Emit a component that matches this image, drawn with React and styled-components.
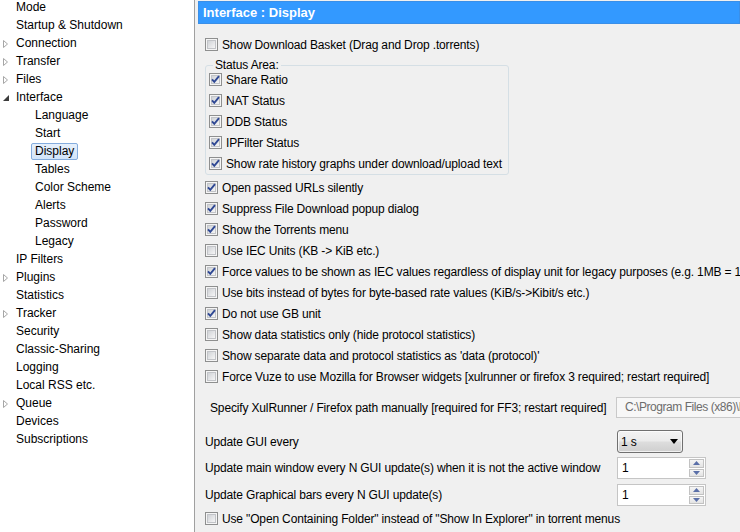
import React from 'react';
import styled, { createGlobalStyle } from 'styled-components';

const Global = createGlobalStyle`
  html, body { margin: 0; padding: 0; }
  body {
    width: 740px; height: 532px; overflow: hidden;
    background: #f0f0f0;
    font-family: "Liberation Sans", Arial, sans-serif;
    font-size: 12px; color: #000;
  }
`;

const Window = styled.div`
  display: flex;
  width: 740px;
  height: 532px;
  overflow: hidden;
`;

/* ---------- Sidebar tree ---------- */
const Sidebar = styled.nav`
  width: 195px;
  flex: none;
  box-sizing: border-box;
  background: #fff;
  border-right: 1px solid #a0a0a0;
  overflow: hidden;
`;

const Tree = styled.ul`
  list-style: none;
  margin: -1.5px 0 0;
  padding: 0;
`;

const TreeRow = styled.li`
  height: 18px;
  display: flex;
  align-items: center;
  padding-left: ${p => p.$level * 19}px;
  white-space: nowrap;
`;

const Twisty = styled.span`
  width: 12px;
  height: 18px;
  flex: none;
  display: flex;
  align-items: center;
`;

const TreeLabel = styled.span`
  height: 17px;
  box-sizing: border-box;
  line-height: 15px;
  padding: 0 3px;
  border: 1px solid ${p => (p.$selected ? '#84acdd' : 'transparent')};
  border-radius: 2px;
  background: ${p => (p.$selected ? 'linear-gradient(#e6f0fc, #d2e4f9)' : 'transparent')};
`;

const Arrow = ({ open }) =>
  open ? (
    <svg width="12" height="12" viewBox="0 0 12 12">
      <path d="M9 3 L9 9 L3 9 Z" fill="#3c3c3c" />
    </svg>
  ) : (
    <svg width="12" height="12" viewBox="0 0 12 12">
      <path d="M3.5 2.5 L7.5 6 L3.5 9.5 Z" fill="#fff" stroke="#a6a6a6" />
    </svg>
  );

const treeItems = [
  { t: 'Mode' },
  { t: 'Startup & Shutdown' },
  { t: 'Connection', a: 'closed' },
  { t: 'Transfer', a: 'closed' },
  { t: 'Files', a: 'closed' },
  { t: 'Interface', a: 'open' },
  { t: 'Language', l: 1 },
  { t: 'Start', l: 1 },
  { t: 'Display', l: 1, s: true },
  { t: 'Tables', l: 1 },
  { t: 'Color Scheme', l: 1 },
  { t: 'Alerts', l: 1 },
  { t: 'Password', l: 1 },
  { t: 'Legacy', l: 1 },
  { t: 'IP Filters' },
  { t: 'Plugins', a: 'closed' },
  { t: 'Statistics' },
  { t: 'Tracker', a: 'closed' },
  { t: 'Security' },
  { t: 'Classic-Sharing' },
  { t: 'Logging' },
  { t: 'Local RSS etc.' },
  { t: 'Queue', a: 'closed' },
  { t: 'Devices' },
  { t: 'Subscriptions' },
];

/* ---------- Right panel ---------- */
const Panel = styled.main`
  flex: 1;
  min-width: 0;
  overflow: hidden;
  padding: 1px 0 0 3px;
  background: #f0f0f0;
`;

const Header = styled.h1`
  margin: 0;
  height: 23px;
  box-sizing: border-box;
  background: #3399ff;
  border: 1px solid #3a8fe8;
  color: #fff;
  font: bold 13px "Liberation Sans", Arial, sans-serif;
  line-height: 21px;
  padding-left: 4px;
  white-space: nowrap;
`;

const Body = styled.div`
  padding: 10px 0 0 7px;
  letter-spacing: -0.15px;
  white-space: nowrap;
`;

const CheckList = styled.div`
  display: flex;
  flex-direction: column;
  margin-top: ${p => p.$top || 0}px;
`;

const CheckRow = styled.label`
  height: 21px;
  display: flex;
  align-items: center;
  gap: 4px;
  white-space: nowrap;
`;

const Group = styled.fieldset`
  width: fit-content;
  margin: 3px 0 0 0;
  padding: 0 6px 0 3px;
  border: 1px solid #d5dfe5;
  border-radius: 3px;
`;

const Legend = styled.legend`
  margin-left: 4px;
  padding: 0 2px;
  line-height: 14px;
`;

const GroupItems = styled.div`
  display: flex;
  flex-direction: column;
  margin-top: -3px;
`;

const FormRow = styled.div`
  display: grid;
  grid-template-columns: ${p => p.$labelWidth || 412}px auto;
  align-items: center;
  height: ${p => p.$h}px;
  margin-top: ${p => p.$top}px;
`;

const FormLabel = styled.span`
  padding-left: ${p => p.$indent || 0}px;
  white-space: nowrap;
`;

const PathField = styled.div`
  width: 200px;
  height: 21px;
  box-sizing: border-box;
  border: 1px solid #c9c9c9;
  background: #f7f7f7;
  color: #6d6d6d;
  padding-left: 8px;
  line-height: 19px;
  letter-spacing: -0.45px;
  white-space: nowrap;
  overflow: hidden;
`;

const Dropdown = styled.div`
  width: 66px;
  height: 23px;
  box-sizing: border-box;
  border: 1px solid #707070;
  border-radius: 3px;
  background: linear-gradient(#f3f3f3, #ebebeb 48%, #dddddd 52%, #cfcfcf);
  box-shadow: inset 0 0 0 1px rgba(255,255,255,0.7);
  display: flex;
  align-items: center;
  justify-content: space-between;
  padding: 0 4px 0 3px;
`;

const Spinner = styled.div`
  width: 89px;
  height: 22px;
  box-sizing: border-box;
  border: 1px solid #c5c5c5;
  background: #fff;
  display: flex;
  align-items: stretch;
`;

const SpinValue = styled.span`
  flex: 1;
  padding-left: 4px;
  line-height: 20px;
`;

const SpinButtons = styled.div`
  width: 15px;
  display: flex;
  flex-direction: column;
  padding: 1px 1px 1px 0;
  gap: 1px;
`;

const SpinButton = styled.span`
  flex: 1;
  border: 1px solid #c2c2c2;
  background: linear-gradient(#f5f5f5, #e3e3e3);
  display: flex;
  align-items: center;
  justify-content: center;
`;

const CheckBox = ({ checked }) => (
  <svg width="13" height="13" viewBox="0 0 13 13" style={{ flex: 'none' }}>
    <defs>
      <linearGradient id="cbg" x1="0" y1="0" x2="1" y2="1">
        <stop offset="0" stopColor="#cdd0d4" />
        <stop offset="1" stopColor="#f8f8f8" />
      </linearGradient>
    </defs>
    <rect x="0.5" y="0.5" width="12" height="12" fill="#f5f5f5" stroke="#8e8f8f" />
    <rect x="2.5" y="2.5" width="8" height="8" fill="url(#cbg)" stroke="#c2c4c8" />
    {checked && (
      <path d="M3 6.3 L5.3 8.9 L10 3.1" fill="none" stroke="#2f4894" strokeWidth="1.9" />
    )}
  </svg>
);

const Check = ({ checked, children }) => (
  <CheckRow>
    <CheckBox checked={checked} />
    <span>{children}</span>
  </CheckRow>
);

const statusItems = [
  'Share Ratio',
  'NAT Status',
  'DDB Status',
  'IPFilter Status',
  'Show rate history graphs under download/upload text',
];

const mainItems = [
  ['Open passed URLs silently', true],
  ['Suppress File Download popup dialog', true],
  ['Show the Torrents menu', true],
  ['Use IEC Units (KB -> KiB etc.)', false],
  ['Force values to be shown as IEC values regardless of display unit for legacy purposes (e.g. 1MB = 1MiB)', true],
  ['Use bits instead of bytes for byte-based rate values (KiB/s->Kibit/s etc.)', false],
  ['Do not use GB unit', true],
  ['Show data statistics only (hide protocol statistics)', false],
  ["Show separate data and protocol statistics as 'data (protocol)'", false],
  ['Force Vuze to use Mozilla for Browser widgets [xulrunner or firefox 3 required; restart required]', false],
];

const SpinArrow = ({ up }) => (
  <svg width="7" height="4" viewBox="0 0 7 4">
    <path d={up ? 'M0 4 L3.5 0 L7 4 Z' : 'M0 0 L3.5 4 L7 0 Z'} fill="#5a6fa8" />
  </svg>
);

const SpinBox = ({ value }) => (
  <Spinner>
    <SpinValue>{value}</SpinValue>
    <SpinButtons>
      <SpinButton><SpinArrow up /></SpinButton>
      <SpinButton><SpinArrow /></SpinButton>
    </SpinButtons>
  </Spinner>
);

export default function App() {
  return (
    <>
      <Global />
      <Window>
        <Sidebar>
          <Tree>
            {treeItems.map(it => (
              <TreeRow key={it.t} $level={it.l || 0}>
                <Twisty>{it.a && <Arrow open={it.a === 'open'} />}</Twisty>
                <TreeLabel $selected={it.s}>{it.t}</TreeLabel>
              </TreeRow>
            ))}
          </Tree>
        </Sidebar>
        <Panel>
          <Header>Interface : Display</Header>
          <Body>
            <Check checked={false}>Show Download Basket (Drag and Drop .torrents)</Check>
            <Group>
              <Legend>Status Area:</Legend>
              <GroupItems>
                {statusItems.map(s => (
                  <Check key={s} checked>{s}</Check>
                ))}
              </GroupItems>
            </Group>
            <CheckList $top={2}>
              {mainItems.map(([t, c]) => (
                <Check key={t} checked={c}>{t}</Check>
              ))}
            </CheckList>
            <FormRow $h={21} $top={10} $labelWidth={411}>
              <FormLabel $indent={5}>Specify XulRunner / Firefox path manually [required for FF3; restart required]</FormLabel>
              <PathField>C:\Program Files (x86)\Mozilla Firefox\</PathField>
            </FormRow>
            <FormRow $h={23} $top={12}>
              <FormLabel>Update GUI every</FormLabel>
              <Dropdown>
                <span>1 s</span>
                <svg width="8" height="5" viewBox="0 0 8 5">
                  <path d="M0 0 L8 0 L4 5 Z" fill="#000" />
                </svg>
              </Dropdown>
            </FormRow>
            <FormRow $h={22} $top={4}>
              <FormLabel>Update main window every N GUI update(s) when it is not the active window</FormLabel>
              <SpinBox value="1" />
            </FormRow>
            <FormRow $h={22} $top={5}>
              <FormLabel>Update Graphical bars every N GUI update(s)</FormLabel>
              <SpinBox value="1" />
            </FormRow>
            <CheckList $top={2}>
              <Check checked={false}>Use "Open Containing Folder" instead of "Show In Explorer" in torrent menus</Check>
            </CheckList>
          </Body>
        </Panel>
      </Window>
    </>
  );
}
